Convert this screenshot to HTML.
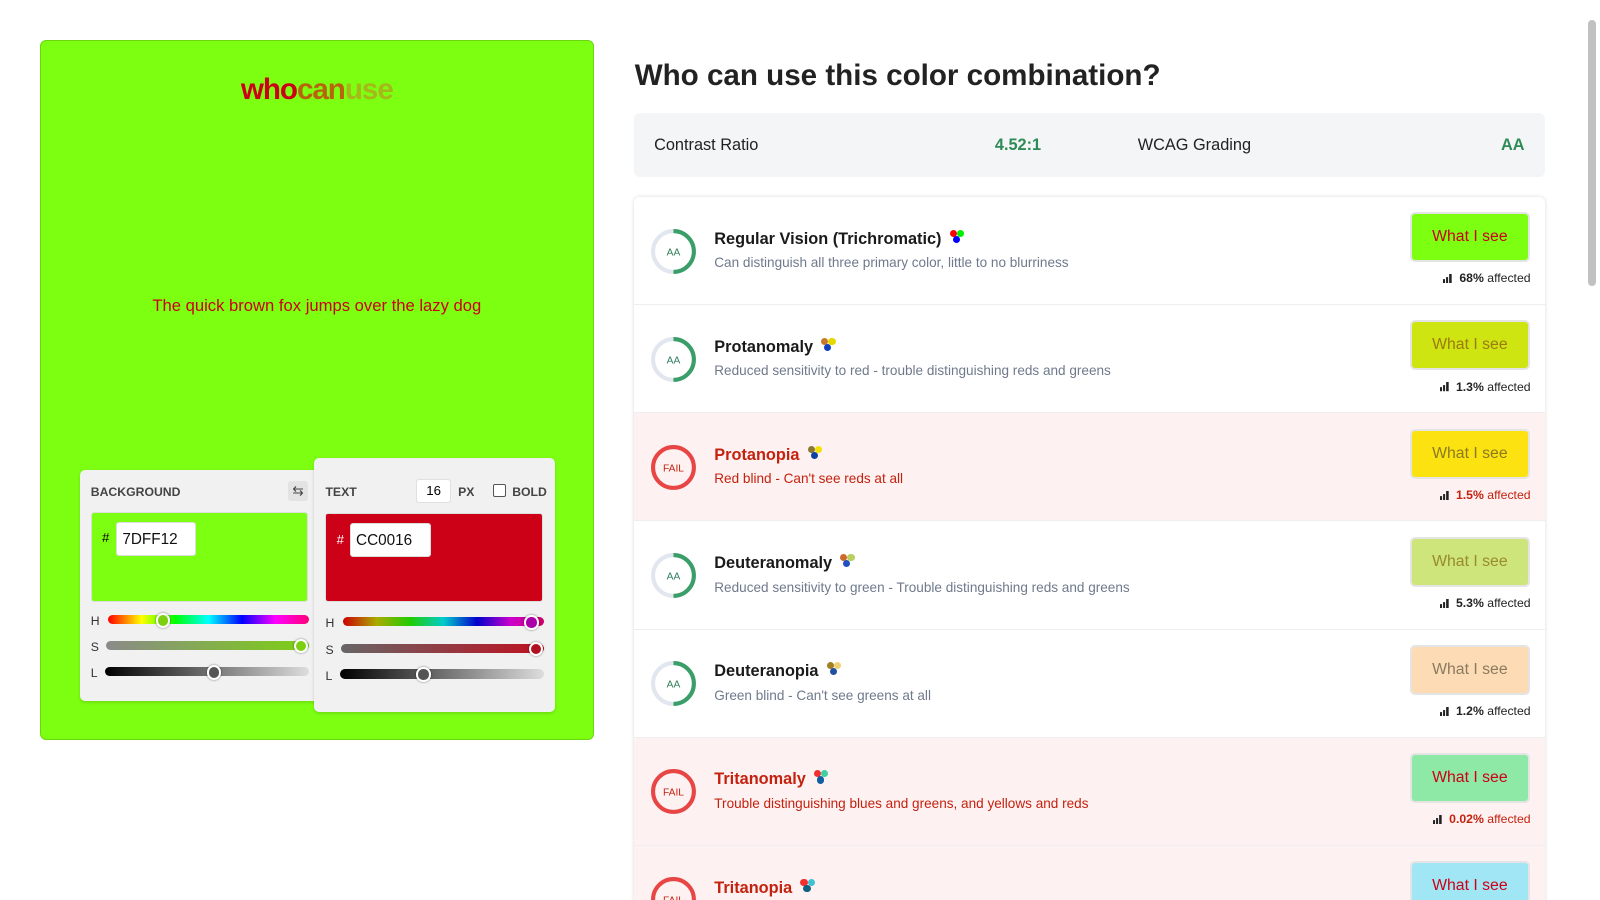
<!DOCTYPE html>
<html><head><style>
*{box-sizing:border-box;margin:0;padding:0}
html,body{width:1600px;height:900px;overflow:hidden;background:#fff}
body{font-family:"Liberation Sans",sans-serif;position:relative}
#w{zoom:1.0204;position:relative;width:1568px;height:882px}
.left{position:absolute;left:39px;top:39px;width:543px;height:686px;background:#7dff12;border-radius:6px;border:1px solid #6ad60f}
.logo{position:absolute;left:0;width:100%;top:32px;text-align:center;font-weight:bold;font-size:29px;letter-spacing:-1px}
.sample{position:absolute;top:250px;width:100%;text-align:center;color:#cc0016;font-size:16.3px}
.panel{position:absolute;background:#f1f1f1;border-radius:5px;box-shadow:0 1px 3px rgba(0,0,0,.15)}
.lbl{position:absolute;font-size:12px;font-weight:bold;color:#444}
.sw{position:absolute;border-radius:3px;border:1px solid #ddd}
.hex{position:absolute;background:#fff;border:1px solid #ddd;border-radius:3px;font-size:15px;padding:7px 5px;color:#111}
.sl{position:absolute;height:10px;border-radius:5px}
.th{position:absolute;width:14px;height:14px;border-radius:50%;border:2px solid #fff;box-shadow:0 0 2px rgba(0,0,0,.5);top:-2px}
.sll{position:absolute;font-size:12px;color:#333}
h1{position:absolute;left:622px;top:58px;font-size:29px;color:#222;font-weight:bold}
.cr{position:absolute;left:621px;top:111px;width:893px;height:62px;background:#f4f5f7;border-radius:6px;font-size:16px;color:#222}
.cr span{position:absolute;top:22px}
.list{position:absolute;left:621px;top:193px;width:893px;height:720px;border-radius:6px;box-shadow:0 0 4px rgba(0,0,0,.15);overflow:hidden}
.row{position:relative;height:106px;border-bottom:1px solid #eee;background:#fff}
.row.f{background:#fdf1f1}
.ring{position:absolute;left:16px;top:30px}
.t{position:absolute;left:79px;top:32px;font-size:16px;font-weight:bold;color:#1a1a1a}
.d{position:absolute;left:79px;top:57px;font-size:13.3px;color:#6f7a8c}
.f .t,.f .d{color:#c4220f}
.btn{position:absolute;left:761px;top:15px;width:117px;height:49px;border:2px solid #e4e4e4;border-radius:5px;text-align:center;line-height:45px;font-size:15.5px}
.aff{position:absolute;right:14px;top:73px;font-size:12px;color:#222}
.aff svg{vertical-align:-1px;margin-right:6px}
.f .aff{color:#c4220f}
.dots{display:inline-block;position:relative;width:16px;height:14px;margin-left:8px;vertical-align:top;top:0}
.dots i{position:absolute;width:7px;height:7px;border-radius:50%}
</style></head><body><div id="w">
<div class="left">
<div class="logo"><span style="color:#cc0016">who</span><span style="color:#b8640c">can</span><span style="color:#a7b81a">use</span></div>
<div class="sample">The quick brown fox jumps over the lazy dog</div>
<div class="panel" style="left:38px;top:421px;width:235px;height:226px">
<div class="lbl" style="left:11px;top:14px">BACKGROUND</div>
<div style="position:absolute;left:204px;top:10px;width:20px;height:20px;background:#e3e3e3;border-radius:3px;font-size:13px;text-align:center;line-height:20px;color:#444">⇆</div>
<div class="sw" style="left:11px;top:41px;width:213px;height:88px;background:#7dff12"></div>
<div style="position:absolute;left:22px;top:58px;font-size:13px">#</div>
<div class="hex" style="left:36px;top:51px;width:78px;height:33px">7DFF12</div>
<div class="sll" style="left:11px;top:141px">H</div>
<div class="sl" style="left:28px;top:142px;width:197px;height:9px;background:linear-gradient(90deg,red,#ff0,#0f0,cyan,blue,#f0f,#f07)"><div class="th" style="left:47px;background:#7dcf12"></div></div>
<div class="sll" style="left:11px;top:166px">S</div>
<div class="sl" style="left:26px;top:167px;width:199px;height:9px;background:linear-gradient(90deg,#8a8a8a,#7dd012)"><div class="th" style="left:184px;background:#7dcf12"></div></div>
<div class="sll" style="left:11px;top:192px">L</div>
<div class="sl" style="left:25px;top:193px;width:200px;height:9px;background:linear-gradient(90deg,#000,#ddd)"><div class="th" style="left:100px;background:#555"></div></div>
</div>
<div class="panel" style="left:268px;top:409px;width:236px;height:249px">
<div class="lbl" style="left:11px;top:26px">TEXT</div>
<div style="position:absolute;left:100px;top:20px;width:34px;height:24px;background:#fff;border:1px solid #e0e0e0;border-radius:3px;font-size:13px;text-align:center;line-height:22px">16</div>
<div class="lbl" style="left:141px;top:26px">PX</div>
<div style="position:absolute;left:175px;top:25px;width:13px;height:13px;border:1px solid #555;border-radius:2px;background:#fff"></div>
<div class="lbl" style="left:194px;top:26px">BOLD</div>
<div class="sw" style="left:11px;top:54px;width:213px;height:87px;background:#cc0016"></div>
<div style="position:absolute;left:22px;top:72px;font-size:13px;color:#fff">#</div>
<div class="hex" style="left:35px;top:64px;width:79px;height:33px">CC0016</div>
<div class="sll" style="left:11px;top:155px">H</div>
<div class="sl" style="left:28px;top:156px;width:197px;height:9px;background:linear-gradient(90deg,#c00,#aa0,#2c0,#0cc,#00c,#c0c,#c06)"><div class="th" style="left:178px;background:#a0a"></div></div>
<div class="sll" style="left:11px;top:181px">S</div>
<div class="sl" style="left:26px;top:182px;width:199px;height:9px;background:linear-gradient(90deg,#666,#c01020)"><div class="th" style="left:184px;background:#b01020"></div></div>
<div class="sll" style="left:11px;top:207px">L</div>
<div class="sl" style="left:25px;top:207px;width:200px;height:9px;background:linear-gradient(90deg,#000,#ddd)"><div class="th" style="left:75px;background:#555"></div></div>
</div>
</div>
<h1>Who can use this color combination?</h1>
<div class="cr"><span style="left:20px">Contrast Ratio</span><span style="left:354px;color:#2e8b57;font-weight:bold">4.52:1</span><span style="left:494px">WCAG Grading</span><span style="left:850px;color:#2e8b57;font-weight:bold">AA</span></div>
<div class="list">
<div class="row"><svg class="ring" width="46" height="46"><circle cx="23" cy="23" r="20" fill="none" stroke="#e2e6ee" stroke-width="4"/><path d="M23 3 A20 20 0 0 1 23 43" fill="none" stroke="#3a9e68" stroke-width="4"/><text x="23" y="27" font-size="10" text-anchor="middle" fill="#2e7d5a" font-family="Liberation Sans">AA</text></svg>
<div class="t">Regular Vision (Trichromatic)<span class="dots"><i style="left:0;top:0;background:#f00"></i><i style="left:7px;top:0;background:#0e0"></i><i style="left:3px;top:6px;background:#00f"></i></span></div>
<div class="d">Can distinguish all three primary color, little to no blurriness</div>
<div class="btn" style="background:#7dff12;color:#cc0016">What I see</div><div class="aff"><svg width="10" height="10"><rect x="0" y="6" width="2" height="4" fill="currentColor"/><rect x="3" y="4" width="2" height="6" fill="currentColor"/><rect x="6" y="1" width="2.5" height="9" fill="currentColor"/></svg><b>68%</b> affected</div></div>

<div class="row"><svg class="ring" width="46" height="46"><circle cx="23" cy="23" r="20" fill="none" stroke="#e2e6ee" stroke-width="4"/><path d="M23 3 A20 20 0 0 1 23 43" fill="none" stroke="#3a9e68" stroke-width="4"/><text x="23" y="27" font-size="10" text-anchor="middle" fill="#2e7d5a" font-family="Liberation Sans">AA</text></svg>
<div class="t">Protanomaly<span class="dots"><i style="left:0;top:0;background:#c47a2a"></i><i style="left:7px;top:0;background:#e6d800"></i><i style="left:3px;top:6px;background:#1040c0"></i></span></div>
<div class="d">Reduced sensitivity to red - trouble distinguishing reds and greens</div>
<div class="btn" style="background:#cfe512;color:#9c7a10">What I see</div><div class="aff"><svg width="10" height="10"><rect x="0" y="6" width="2" height="4" fill="currentColor"/><rect x="3" y="4" width="2" height="6" fill="currentColor"/><rect x="6" y="1" width="2.5" height="9" fill="currentColor"/></svg><b>1.3%</b> affected</div></div>

<div class="row f"><svg class="ring" width="46" height="46"><circle cx="23" cy="23" r="20" fill="none" stroke="#e84545" stroke-width="4"/><text x="23" y="27" font-size="10" text-anchor="middle" fill="#c4220f" font-family="Liberation Sans">FAIL</text></svg>
<div class="t">Protanopia<span class="dots"><i style="left:0;top:0;background:#8a7a30"></i><i style="left:7px;top:0;background:#f4e000"></i><i style="left:3px;top:6px;background:#1040a0"></i></span></div>
<div class="d">Red blind - Can't see reds at all</div>
<div class="btn" style="background:#fde212;color:#8a7a20">What I see</div><div class="aff"><svg width="10" height="10"><rect x="0" y="6" width="2" height="4" fill="#222"/><rect x="3" y="4" width="2" height="6" fill="#222"/><rect x="6" y="1" width="2.5" height="9" fill="#222"/></svg><b>1.5%</b> affected</div></div>

<div class="row"><svg class="ring" width="46" height="46"><circle cx="23" cy="23" r="20" fill="none" stroke="#e2e6ee" stroke-width="4"/><path d="M23 3 A20 20 0 0 1 23 43" fill="none" stroke="#3a9e68" stroke-width="4"/><text x="23" y="27" font-size="10" text-anchor="middle" fill="#2e7d5a" font-family="Liberation Sans">AA</text></svg>
<div class="t">Deuteranomaly<span class="dots"><i style="left:0;top:0;background:#d06a2a"></i><i style="left:7px;top:0;background:#b8d060"></i><i style="left:3px;top:6px;background:#2050c0"></i></span></div>
<div class="d">Reduced sensitivity to green - Trouble distinguishing reds and greens</div>
<div class="btn" style="background:#cde57a;color:#9a8a30">What I see</div><div class="aff"><svg width="10" height="10"><rect x="0" y="6" width="2" height="4" fill="currentColor"/><rect x="3" y="4" width="2" height="6" fill="currentColor"/><rect x="6" y="1" width="2.5" height="9" fill="currentColor"/></svg><b>5.3%</b> affected</div></div>

<div class="row"><svg class="ring" width="46" height="46"><circle cx="23" cy="23" r="20" fill="none" stroke="#e2e6ee" stroke-width="4"/><path d="M23 3 A20 20 0 0 1 23 43" fill="none" stroke="#3a9e68" stroke-width="4"/><text x="23" y="27" font-size="10" text-anchor="middle" fill="#2e7d5a" font-family="Liberation Sans">AA</text></svg>
<div class="t">Deuteranopia<span class="dots"><i style="left:0;top:0;background:#a08020"></i><i style="left:7px;top:0;background:#f0d070"></i><i style="left:3px;top:6px;background:#2050a0"></i></span></div>
<div class="d">Green blind - Can't see greens at all</div>
<div class="btn" style="background:#fddcb5;color:#8a7a60">What I see</div><div class="aff"><svg width="10" height="10"><rect x="0" y="6" width="2" height="4" fill="currentColor"/><rect x="3" y="4" width="2" height="6" fill="currentColor"/><rect x="6" y="1" width="2.5" height="9" fill="currentColor"/></svg><b>1.2%</b> affected</div></div>

<div class="row f"><svg class="ring" width="46" height="46"><circle cx="23" cy="23" r="20" fill="none" stroke="#e84545" stroke-width="4"/><text x="23" y="27" font-size="10" text-anchor="middle" fill="#c4220f" font-family="Liberation Sans">FAIL</text></svg>
<div class="t">Tritanomaly<span class="dots"><i style="left:0;top:0;background:#f03030"></i><i style="left:7px;top:0;background:#40d0a0"></i><i style="left:3px;top:6px;background:#1060a0"></i></span></div>
<div class="d">Trouble distinguishing blues and greens, and yellows and reds</div>
<div class="btn" style="background:#8ee8a6;color:#cc0016">What I see</div><div class="aff"><svg width="10" height="10"><rect x="0" y="6" width="2" height="4" fill="#222"/><rect x="3" y="4" width="2" height="6" fill="#222"/><rect x="6" y="1" width="2.5" height="9" fill="#222"/></svg><b>0.02%</b> affected</div></div>

<div class="row f"><svg class="ring" width="46" height="46"><circle cx="23" cy="23" r="20" fill="none" stroke="#e84545" stroke-width="4"/><text x="23" y="27" font-size="10" text-anchor="middle" fill="#c4220f" font-family="Liberation Sans">FAIL</text></svg>
<div class="t">Tritanopia<span class="dots"><i style="left:0;top:0;background:#f03030"></i><i style="left:7px;top:0;background:#40c0d0"></i><i style="left:3px;top:6px;background:#106080"></i></span></div>
<div class="btn" style="background:#a0e6f5;color:#cc0016">What I see</div></div>
</div>
<div style="position:absolute;left:1552px;top:0;width:16px;height:882px;background:#fff"></div>
<div style="position:absolute;left:1556px;top:20px;width:8px;height:260px;background:#c1c1c1;border-radius:4px"></div>
</div></body></html>
